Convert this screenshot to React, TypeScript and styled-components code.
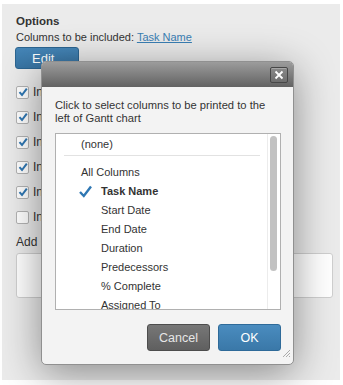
import React from 'react';
import styled, { createGlobalStyle } from 'styled-components';

const GlobalStyle = createGlobalStyle`
  html, body {
    margin: 0;
    padding: 0;
    background: #ffffff;
  }
  body {
    font-family: "Liberation Sans", Arial, sans-serif;
    color: #333;
  }
`;

const Page = styled.div`
  position: relative;
  width: 343px;
  height: 385px;
  padding: 4px 3px 5px 2px;
  box-sizing: border-box;
`;

const Panel = styled.div`
  background: #ebebeb;
  height: 376px;
  padding: 10px 9px 0 14px;
  box-sizing: border-box;
  font-size: 11px;
`;

const Title = styled.div`
  font-weight: bold;
  font-size: 11.5px;
  line-height: 15px;
`;

const Line = styled.div`
  margin-top: 1px;
  line-height: 14px;
  font-size: 11px;
`;

const Link = styled.a`
  color: #3a7fb4;
  text-decoration: underline;
`;

const EditButton = styled.button`
  display: block;
  margin-top: 3px;
  margin-left: -1px;
  width: 64px;
  height: 22px;
  border: 1px solid #2c6591;
  border-radius: 3px;
  background: linear-gradient(#4586b8, #3874a3);
  color: #fff;
  font-family: inherit;
  font-size: 13px;
  text-align: left;
  padding: 0 0 0 16px;
`;

const CheckList = styled.div`
  margin-top: 17px;
  display: flex;
  flex-direction: column;
  gap: 13px;
`;

const CheckRow = styled.div`
  display: flex;
  align-items: center;
  gap: 4px;
  height: 12px;
  font-size: 12px;
`;

const Box = styled.span`
  width: 11px;
  height: 11px;
  border: 1px solid #b3b3b3;
  border-radius: 2px;
  background: #fff;
  display: flex;
  align-items: center;
  justify-content: center;
`;

const AddLabel = styled.div`
  margin-top: 12px;
  font-size: 12px;
  line-height: 14px;
`;

const TextArea = styled.div`
  margin-top: 4px;
  height: 43px;
  width: 315px;
  border: 1px solid #cfcfcf;
  border-radius: 3px;
  background: #fff;
`;

const Modal = styled.div`
  position: absolute;
  left: 41px;
  top: 61px;
  width: 253px;
  height: 304px;
  border-radius: 5px;
  background: #f3f3f3;
  border: 1px solid #909090;
  box-sizing: border-box;
  box-shadow: 0 8px 40px rgba(0, 0, 0, 0.42);
  display: flex;
  flex-direction: column;
`;

const Header = styled.div`
  height: 25px;
  border-radius: 4px 4px 0 0;
  background: linear-gradient(#9c9c9c, #626262);
  display: flex;
  justify-content: flex-end;
  align-items: center;
  padding-right: 5px;
`;

const CloseButton = styled.span`
  width: 16px;
  height: 14px;
  border: 1px solid #474747;
  border-radius: 2px;
  background: linear-gradient(#8a8a8a, #6e6e6e);
  box-shadow: inset 0 1px 0 rgba(255, 255, 255, 0.25);
  display: flex;
  align-items: center;
  justify-content: center;
`;

const Body = styled.div`
  position: relative;
  flex: 1;
  padding: 12px 12px 0 13px;
`;

const Intro = styled.p`
  margin: 0;
  font-size: 11.2px;
  line-height: 13px;
  color: #333;
`;

const ListBox = styled.div`
  position: relative;
  margin-top: 8px;
  height: 177px;
  width: 226px;
  box-sizing: border-box;
  border: 1px solid #b0b0b0;
  background: #fff;
  overflow: hidden;
  padding-top: 1px;
`;

const Item = styled.div<{ $indent?: boolean; $bold?: boolean }>`
  position: relative;
  height: 19px;
  line-height: 19px;
  font-size: 11px;
  padding-left: ${(p) => (p.$indent ? 45 : 25)}px;
  font-weight: ${(p) => (p.$bold ? 'bold' : 'normal')};
  color: #333;
  white-space: nowrap;
`;

const Separator = styled.div`
  margin: 1px 0 7px 8px;
  width: 196px;
  height: 1px;
  background: #e2e2e2;
`;

const Tick = styled.span`
  position: absolute;
  left: 23px;
  top: 3px;
`;

const Track = styled.div`
  position: absolute;
  top: 0;
  right: 0;
  bottom: 0;
  width: 12px;
  background: #fff;
  border-left: 1px solid #ececec;
`;

const Thumb = styled.div`
  margin: 2px 0 0 2px;
  width: 7px;
  height: 135px;
  border-radius: 4px;
  background: #c2c2c2;
`;

const Footer = styled.div`
  display: flex;
  justify-content: flex-end;
  gap: 8px;
  margin-top: 14px;
`;

const DialogButton = styled.button<{ $primary?: boolean }>`
  width: 63px;
  height: 27px;
  border-radius: 3px;
  border: 1px solid ${(p) => (p.$primary ? '#2e6a99' : '#4d4d4d')};
  background: ${(p) =>
    p.$primary ? 'linear-gradient(#4a8cbf, #3a78a8)' : 'linear-gradient(#777, #5f5f5f)'};
  color: ${(p) => (p.$primary ? '#fff' : '#e6e6e6')};
  font-family: inherit;
  font-size: 12.5px;
  padding: 0;
`;

const Grip = styled.span`
  position: absolute;
  right: 2px;
  bottom: 2px;
`;

const Check = ({ on }: { on: boolean }) => (
  <Box>
    {on && (
      <svg width="10" height="10" viewBox="0 0 10 10">
        <path d="M1.5 5.2 L4 8 L8.8 1.6" fill="none" stroke="#2f77b3" strokeWidth="2" />
      </svg>
    )}
  </Box>
);

const rows = [true, true, true, true, true, false];
const columns = ['Start Date', 'End Date', 'Duration', 'Predecessors', '% Complete', 'Assigned To'];

export default function App() {
  return (
    <>
      <GlobalStyle />
      <Page>
        <Panel>
          <Title>Options</Title>
          <Line>
            Columns to be included: <Link>Task Name</Link>
          </Line>
          <EditButton>Edit</EditButton>
          <CheckList>
            {rows.map((on, i) => (
              <CheckRow key={i}>
                <Check on={on} />
                <span>Include</span>
              </CheckRow>
            ))}
          </CheckList>
          <AddLabel>Add notes</AddLabel>
          <TextArea />
        </Panel>

        <Modal>
          <Header>
            <CloseButton>
              <svg width="10" height="10" viewBox="0 0 10 10">
                <path d="M1.5 1.5 L8.5 8.5 M8.5 1.5 L1.5 8.5" stroke="#fff" strokeWidth="1.8" />
              </svg>
            </CloseButton>
          </Header>
          <Body>
            <Intro>
              Click to select columns to be printed to the
              <br />
              left of Gantt chart
            </Intro>
            <ListBox>
              <Item>(none)</Item>
              <Separator />
              <Item>All Columns</Item>
              <Item $indent $bold>
                <Tick>
                  <svg width="13" height="13" viewBox="0 0 13 13">
                    <path d="M1 7 L4.8 11 L12 1.5" fill="none" stroke="#2f77b3" strokeWidth="2.4" />
                  </svg>
                </Tick>
                Task Name
              </Item>
              {columns.map((c) => (
                <Item key={c} $indent>
                  {c}
                </Item>
              ))}
              <Track>
                <Thumb />
              </Track>
            </ListBox>
            <Footer>
              <DialogButton>Cancel</DialogButton>
              <DialogButton $primary>OK</DialogButton>
            </Footer>
            <Grip>
              <svg width="10" height="10" viewBox="0 0 10 10">
                <path d="M9 2 L2 9 M9 5 L5 9 M9 8 L8 9" stroke="#aaa" strokeWidth="1" />
              </svg>
            </Grip>
          </Body>
        </Modal>
      </Page>
    </>
  );
}
